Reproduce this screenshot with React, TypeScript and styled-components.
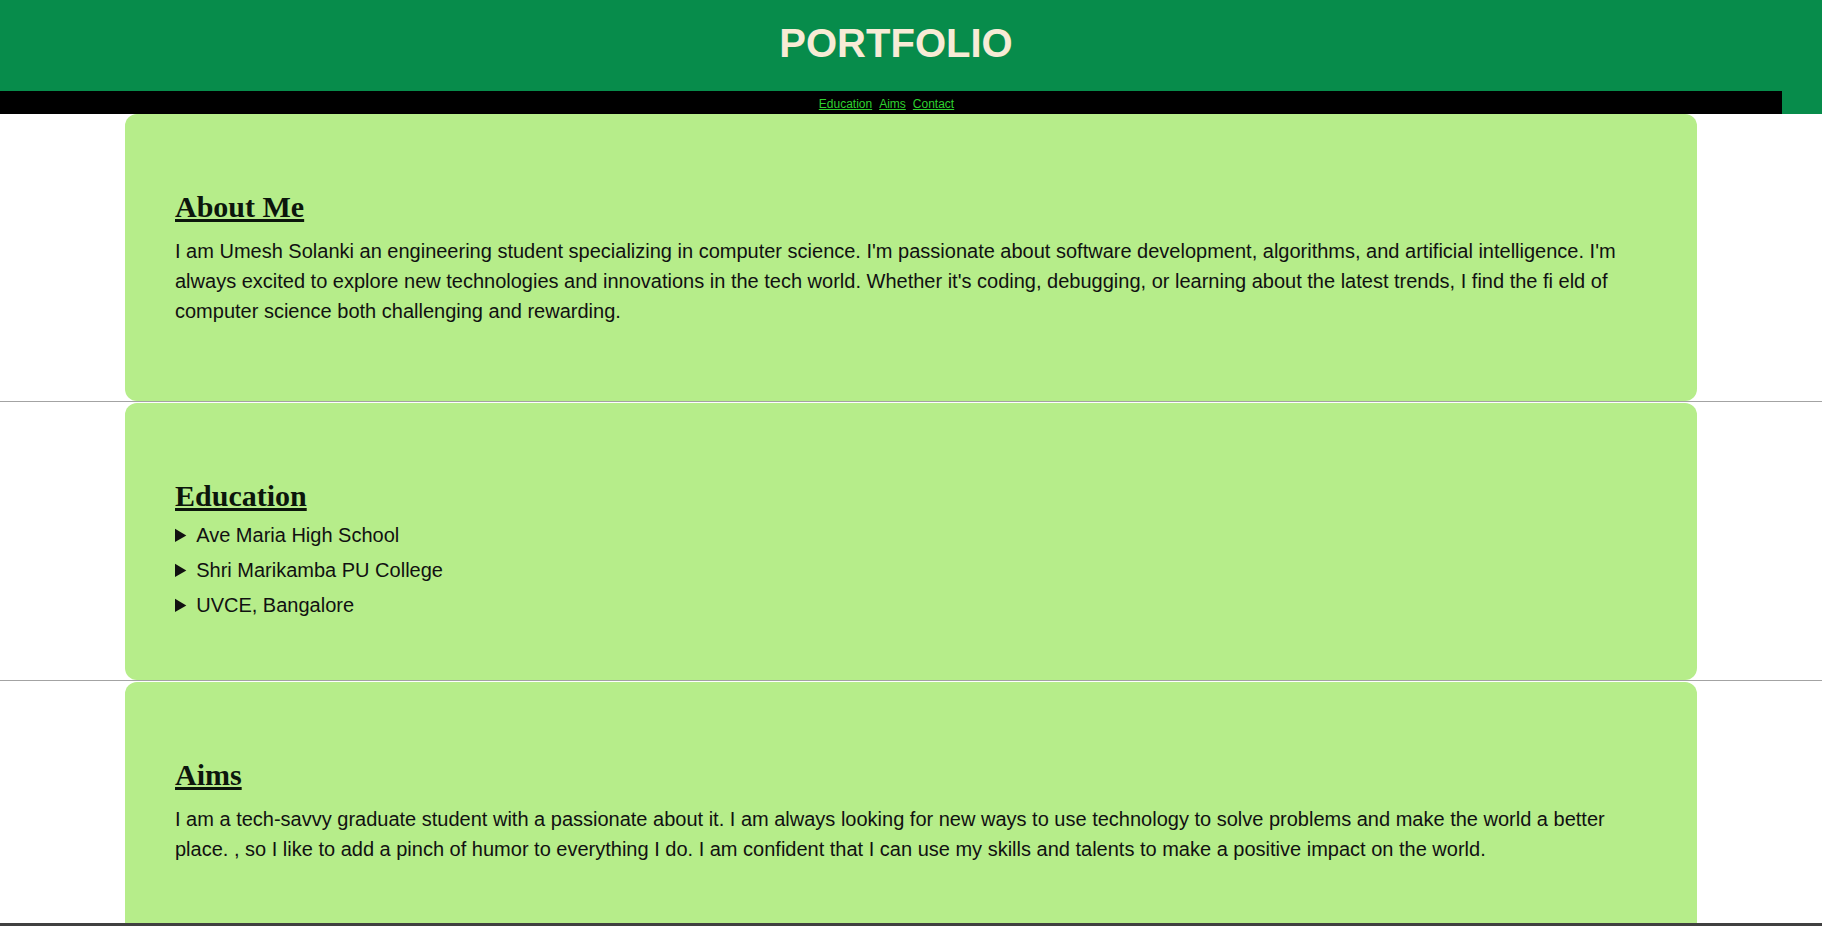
import React from "react";
import styled, { createGlobalStyle } from "styled-components";

const Global = createGlobalStyle`
  html, body { margin: 0; padding: 0; background: #ffffff; }
  html::-webkit-scrollbar, body::-webkit-scrollbar { width: 0; height: 0; display: none; }
  html { scrollbar-width: none; }
  body { font-family: "Liberation Sans", Arial, sans-serif; color: #111; }
`;

const Header = styled.header`
  background: #078c4b;
  display: flex;
  flex-direction: column;
`;

const Title = styled.h1`
  margin: 0;
  height: 91px;
  box-sizing: border-box;
  padding: 20px 30px 0 0;
  text-align: center;
  font-family: "Liberation Sans", Arial, sans-serif;
  font-weight: bold;
  font-size: 40px;
  line-height: 46px;
  color: #f7ebd6;
`;

const Nav = styled.nav`
  width: calc(100% - 40px);
  height: 23px;
  box-sizing: border-box;
  background: #000;
  display: flex;
  justify-content: center;
  align-items: center;
  gap: 7px;
  padding: 2px 9px 0 0;
`;

const NavLink = styled.a`
  font-family: "Liberation Sans", Arial, sans-serif;
  font-size: 12px;
  color: #2fd02f;
  text-decoration: underline;
  line-height: 14px;
`;

const Card = styled.section`
  width: calc(100% - 250px);
  margin: 0 auto;
  box-sizing: border-box;
  background: #b6ed8a;
  border-radius: 12px;
  padding: 76px 50px 60px;
`;

const Heading = styled.h2`
  margin: 0 0 13px;
  font-family: "Liberation Serif", "Times New Roman", serif;
  font-weight: bold;
  font-size: 30px;
  line-height: 33px;
  text-decoration: underline;
  color: #0c160c;
`;

const Text = styled.p`
  margin: 0 0 15px;
  font-size: 20px;
  line-height: 30px;
  color: #111;
`;

const List = styled.div`
  display: flex;
  flex-direction: column;
  gap: 12px;
  margin-top: -1px;
  padding-bottom: 3px;
`;

const Item = styled.details`
  font-size: 20px;
  line-height: 23px;
  color: #111;
`;

const ItemTitle = styled.summary`
  cursor: pointer;
`;

const Rule = styled.hr`
  margin: 0;
  border: none;
  border-top: 1px solid #a3a3a3;
  height: 1px;
  background: #fff;
`;

const Footer = styled.footer`
  position: fixed;
  left: 0;
  right: 0;
  bottom: 0;
  height: 3px;
  background: #404040;
`;

export default function App() {
  return (
    <>
      <Global />
      <Header>
        <Title>PORTFOLIO</Title>
        <Nav>
          <NavLink href="#education">Education</NavLink>
          <NavLink href="#aims">Aims</NavLink>
          <NavLink href="#contact">Contact</NavLink>
        </Nav>
      </Header>
      <Card id="about">
        <Heading>About Me</Heading>
        <Text>
          I am Umesh Solanki an engineering student specializing in computer science. I'm passionate about software
          development, algorithms, and artificial intelligence. I'm always excited to explore new technologies and
          innovations in the tech world. Whether it's coding, debugging, or learning about the latest trends, I find the
          fi eld of computer science both challenging and rewarding.
        </Text>
      </Card>
      <Rule />
      <Card id="education">
        <Heading>Education</Heading>
        <List>
          <Item>
            <ItemTitle>Ave Maria High School</ItemTitle>
          </Item>
          <Item>
            <ItemTitle>Shri Marikamba PU College</ItemTitle>
          </Item>
          <Item>
            <ItemTitle>UVCE, Bangalore</ItemTitle>
          </Item>
        </List>
      </Card>
      <Rule />
      <Card id="aims">
        <Heading>Aims</Heading>
        <Text>
          I am a tech-savvy graduate student with a passionate about it. I am always looking for new ways to use
          technology to solve problems and make the world a better place. , so I like to add a pinch of humor to
          everything I do. I am confident that I can use my skills and talents to make a positive impact on the world.
        </Text>
      </Card>
      <Rule />
      <Footer id="contact" />
    </>
  );
}
